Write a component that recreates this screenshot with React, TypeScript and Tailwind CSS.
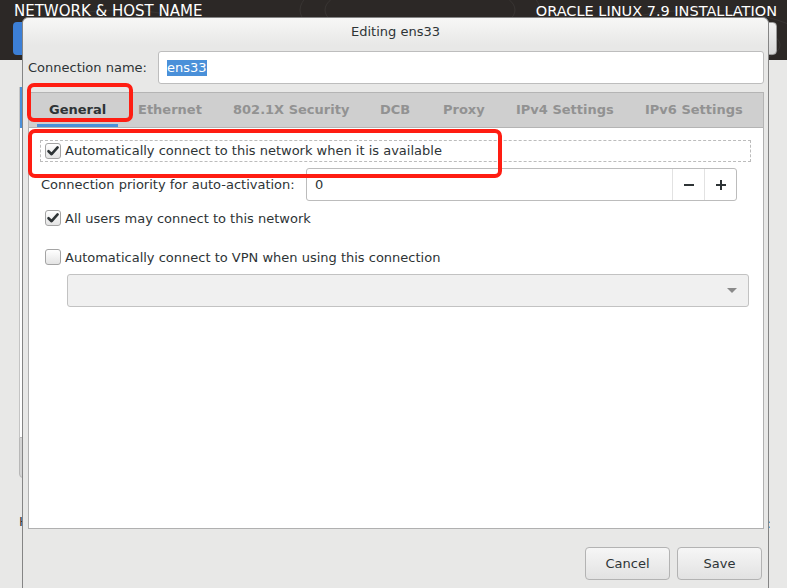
import React from "react";

function CheckBox({ checked }: { checked: boolean }) {
  return (
    <div className="w-[16px] h-[16px] shrink-0 rounded-[3px] border border-[#a4a4a4] bg-gradient-to-b from-[#ffffff] to-[#e4e4e4] flex items-center justify-center">
      {checked && (
        <svg width="14" height="14" viewBox="0 0 14 14">
          <path d="M2.5 7.2 L5.6 10.2 L11.6 3.4" fill="none" stroke="#2e3436" strokeWidth="2.6" strokeLinecap="round" strokeLinejoin="round" />
        </svg>
      )}
    </div>
  );
}

const tabs = [
  { label: "General", w: "w-[89px]", active: true },
  { label: "Ethernet", w: "w-[95px]" },
  { label: "802.1X Security", w: "w-[147px]" },
  { label: "DCB", w: "w-[63px]" },
  { label: "Proxy", w: "w-[73px]" },
  { label: "IPv4 Settings", w: "w-[129px]" },
  { label: "IPv6 Settings", w: "w-[129px]" },
];

export default function App() {
  return (
    <div className="relative w-[787px] h-[588px] overflow-hidden bg-[#e8e8e7] font-['DejaVu_Sans',sans-serif] text-[#2e3436]">
      {/* Background: installer hub header */}
      <div className="relative h-[60px] bg-[#2c2826] overflow-hidden">
        <svg className="absolute inset-0" width="787" height="60" viewBox="0 0 787 60">
          <g fill="none" stroke="#ffffff" strokeOpacity="0.06" strokeWidth="1">
            <ellipse cx="120" cy="40" rx="90" ry="30" />
            <ellipse cx="120" cy="40" rx="70" ry="22" />
            <ellipse cx="120" cy="40" rx="50" ry="14" />
            <ellipse cx="420" cy="10" rx="120" ry="40" />
            <ellipse cx="420" cy="10" rx="95" ry="30" />
            <ellipse cx="700" cy="45" rx="110" ry="35" />
            <ellipse cx="700" cy="45" rx="80" ry="24" />
            <ellipse cx="700" cy="45" rx="50" ry="14" />
          </g>
        </svg>
        <div className="relative flex justify-between pl-[14px] pr-[10px] pt-[2px] text-white leading-[18px]">
          <span className="text-[15px]">NETWORK &amp; HOST NAME</span>
          <span className="text-[14.5px]">ORACLE LINUX 7.9 INSTALLATION</span>
        </div>
        <div className="relative flex justify-between pl-[13px] pr-[10px] mt-[2px]">
          <div className="w-[80px] h-[33px] rounded-[4px] bg-[#3c7fd6]" />
          <div className="w-[80px] h-[33px] rounded-[4px] bg-gradient-to-b from-[#f2f2f2] to-[#d8d8d8] border border-[#9a9a9a]" />
        </div>
      </div>
      <div className="flex h-[528px]">
        <div className="w-[19px] shrink-0" />
        <div className="flex flex-col pt-[27px] w-[300px]">
          <div className="border-l border-[#c4c4c4]">
            <div className="h-[41px] bg-[#4a90d9]" />
            <div className="h-[309px] bg-white" />
          </div>
          <div className="h-[41px] bg-[#d4d4d4] border border-[#b8b8b8] rounded-bl-[4px]" />
          <div className="mt-[34px] text-[13px] text-[#2e3436]">Host name:</div>
        </div>
        <div className="flex-1" />
        <div className="pt-[454px] pr-[16px] text-[13px]">Current host name:</div>
      </div>

      {/* Dialog window */}
      <div className="absolute left-[22px] top-[17px] w-[747px] h-[580px] bg-[#e8e8e7] border border-[#858585] rounded-t-[6px] flex flex-col">
        <div className="h-[27px] shrink-0 rounded-t-[6px] bg-gradient-to-b from-[#f7f7f6] to-[#e8e8e7] flex items-center justify-center text-[13px] pt-[1px]">
          Editing ens33
        </div>
        <div className="flex flex-col pl-[5px] pr-[4px] pt-[6px]">
          <div className="flex items-center h-[33px]">
            <div className="w-[130px] text-[13px]">Connection name:</div>
            <div className="flex-1 h-[33px] bg-white border border-[#bdbdbd] rounded-[3px] flex items-center pl-[8px] text-[13px]">
              <span className="bg-[#4a90d9] text-white leading-[16px]">ens33</span>
            </div>
          </div>

          {/* Notebook */}
          <div className="mt-[8px] flex flex-col">
            <div className="h-[36px] bg-[#cfcfcf] border border-[#b4b4b4] flex pl-[4px]">
              {tabs.map((t) => (
                <div key={t.label} className={`${t.w} relative flex items-center pl-[16px] shrink-0`}>
                  <span className={`text-[13px] font-bold ${t.active ? "text-[#2e3436]" : "text-[#929292]"}`}>{t.label}</span>
                  {t.active && <div className="absolute left-[4px] right-[4px] bottom-[0px] h-[3px] bg-[#4a90d9]" />}
                </div>
              ))}
            </div>
            <div className="h-[401px] bg-white border border-t-0 border-[#b0b0b0] flex flex-col">
              <div className="mt-[12px] ml-[11px] mr-[12px] h-[22px] border border-dashed border-[#bcbcbc] flex items-center pl-[4px] gap-[4px]">
                <CheckBox checked />
                <span className="text-[13px]">Automatically connect to this network when it is available</span>
              </div>
              <div className="mt-[6px] ml-[12px] flex items-center h-[33px]">
                <div className="w-[265px] text-[13px]">Connection priority for auto-activation:</div>
                <div className="w-[431px] h-[33px] border border-[#bcbcbc] rounded-[3px] flex">
                  <div className="flex-1 flex items-center pl-[8px] text-[13px]">0</div>
                  <div className="w-[32px] border-l border-[#e2e2e2] flex items-center justify-center">
                    <div className="w-[10px] h-[2px] bg-[#2e3436]" />
                  </div>
                  <div className="w-[32px] border-l border-[#e2e2e2] flex items-center justify-center">
                    <svg width="12" height="12" viewBox="0 0 12 12">
                      <rect x="1" y="5" width="10" height="2" fill="#2e3436" />
                      <rect x="5" y="1" width="2" height="10" fill="#2e3436" />
                    </svg>
                  </div>
                </div>
              </div>
              <div className="mt-[9px] ml-[16px] flex items-center gap-[4px] h-[16px]">
                <CheckBox checked />
                <span className="text-[13px] leading-[16px] pt-[1px]">All users may connect to this network</span>
              </div>
              <div className="mt-[23px] ml-[16px] flex items-center gap-[4px] h-[16px]">
                <CheckBox checked={false} />
                <span className="text-[13px] leading-[16px] pt-[1px]">Automatically connect to VPN when using this connection</span>
              </div>
              <div className="mt-[9px] ml-[38px] w-[682px] h-[33px] bg-[#f0f0f0] border border-[#c2c2c2] rounded-[3px] flex items-center justify-end pr-[11px]">
                <svg width="10" height="6" viewBox="0 0 10 6">
                  <path d="M0 0 L10 0 L5 5 Z" fill="#8a8a8a" />
                </svg>
              </div>
            </div>
          </div>

          <div className="mt-[18px] flex justify-end gap-[7px] pr-[2px]">
            <button className="w-[85px] h-[33px] rounded-[4px] border border-[#b3b3b3] bg-gradient-to-b from-[#f6f6f6] to-[#e2e2e2] text-[13px] text-[#2e3436]">Cancel</button>
            <button className="w-[85px] h-[33px] rounded-[4px] border border-[#b3b3b3] bg-gradient-to-b from-[#f6f6f6] to-[#e2e2e2] text-[13px] text-[#2e3436]">Save</button>
          </div>
        </div>
      </div>

      {/* Red annotation boxes */}
      <div className="absolute left-[27px] top-[83px] w-[106px] h-[39px] border-[4px] border-[#ff1d12] rounded-[7px]" />
      <div className="absolute left-[28px] top-[129px] w-[474px] h-[49px] border-[4px] border-[#ff1d12] rounded-[7px]" />
    </div>
  );
}
